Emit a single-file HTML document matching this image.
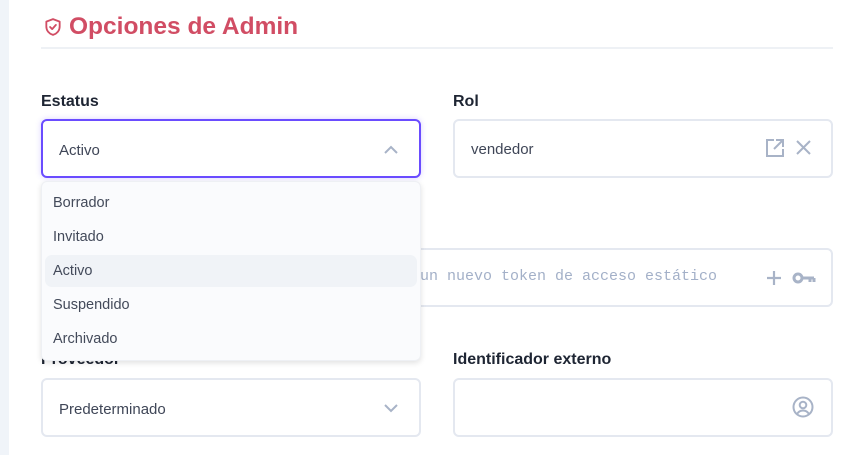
<!DOCTYPE html>
<html><head><meta charset="utf-8"><style>
*{box-sizing:border-box;margin:0;padding:0}
body{width:855px;height:455px;background:#fff;font-family:"Liberation Sans",sans-serif;position:relative;overflow:hidden}
.strip{position:absolute;left:0;top:0;width:9px;height:455px;background:#f0f4f9}
.title{position:absolute;left:69px;top:13px;font-size:24.5px;font-weight:bold;color:#d14d64}
.hr{position:absolute;left:41px;top:47px;width:792px;height:2px;background:#eef1f5}
.lbl{position:absolute;font-size:16px;font-weight:bold;color:#1e2533}
.box{position:absolute;border:2px solid #e4e8f0;border-radius:6px;background:#fff;height:59px}
.txt{position:absolute;font-size:15px;color:#3f4657}
.dd{position:absolute;left:41px;top:181px;width:380px;height:180px;background:#fafbfd;border-radius:6px;box-shadow:0 2px 6px rgba(0,0,0,.12);border:1px solid #eef0f4}
.it{position:absolute;left:11px;font-size:14.5px;color:#434a5a}
.hl{position:absolute;left:3px;top:73px;width:372px;height:32px;background:#f0f3f7;border-radius:7px}
svg{position:absolute}
</style></head><body>
<div class="strip"></div>
<svg style="left:43px;top:17px" width="20" height="20" viewBox="0 0 24 24" fill="none" stroke="#d14d64" stroke-width="2.2" stroke-linecap="round" stroke-linejoin="round"><path d="M12 2.5l8 3v6c0 5-3.5 8.5-8 10-4.5-1.5-8-5-8-10v-6z"/><path d="M8.5 12l2.5 2.5 4.5-5"/></svg>
<div class="title">Opciones de Admin</div>
<div class="hr"></div>

<div class="lbl" style="left:41px;top:93px">Estatus</div>
<div class="box" style="left:41px;top:119px;width:380px;border-color:#6a4cff;box-shadow:0 0 6px rgba(106,76,255,.25)"></div>
<div class="txt" style="left:59px;top:142px">Activo</div>
<svg style="left:383px;top:144px" width="16" height="12" viewBox="0 0 16 12" fill="none" stroke="#a8b3c7" stroke-width="2"><path d="M2 9l6-6 6 6"/></svg>

<div class="lbl" style="left:453px;top:93px">Rol</div>
<div class="box" style="left:453px;top:119px;width:380px"></div>
<div class="txt" style="left:471px;top:141px">vendedor</div>
<svg style="left:765px;top:138px" width="20" height="20" viewBox="0 0 20 20" fill="none" stroke="#a8b3c7" stroke-width="2"><path d="M9 2H2v16h16v-7"/><path d="M11 2h7v7M18 2l-9 9"/></svg>
<svg style="left:795px;top:139px" width="17" height="17" viewBox="0 0 17 17" fill="none" stroke="#a8b3c7" stroke-width="2"><path d="M2 2l13 13M15 2L2 15"/></svg>

<div class="box" style="left:300px;top:248px;width:533px"></div>
<div style="position:absolute;left:420px;top:268px;font-family:'Liberation Mono',monospace;font-size:15px;color:#a3b0c8">un nuevo token de acceso estático</div>
<svg style="left:766px;top:270px" width="16" height="16" viewBox="0 0 16 16" fill="none" stroke="#a8b3c7" stroke-width="2.2"><path d="M8 1v14M1 8h14"/></svg>
<svg style="left:792px;top:270px" width="24" height="16" viewBox="0 0 24 16" fill="none" stroke="#a8b3c7" stroke-width="3"><circle cx="6" cy="8" r="4"/><path d="M10 8h12M18 8v4M22 8v4"/></svg>

<div class="lbl" style="left:41px;top:351px">Proveedor</div>
<div class="box" style="left:41px;top:378px;width:380px"></div>
<div class="txt" style="left:59px;top:401px">Predeterminado</div>
<svg style="left:383px;top:402px" width="16" height="12" viewBox="0 0 16 12" fill="none" stroke="#a8b3c7" stroke-width="2"><path d="M2 3l6 6 6-6"/></svg>

<div class="lbl" style="left:453px;top:351px">Identificador externo</div>
<div class="box" style="left:453px;top:378px;width:380px"></div>
<svg style="left:792px;top:396px" width="22" height="22" viewBox="0 0 22 22" fill="none" stroke="#a8b3c7" stroke-width="2"><circle cx="11" cy="11" r="9.5"/><circle cx="11" cy="9" r="3.3"/><path d="M5 18c1.5-2.5 3.5-3.5 6-3.5s4.5 1 6 3.5"/></svg>

<div class="dd">
<div class="hl"></div>
<div class="it" style="top:13px">Borrador</div>
<div class="it" style="top:47px">Invitado</div>
<div class="it" style="top:81px">Activo</div>
<div class="it" style="top:115px">Suspendido</div>
<div class="it" style="top:149px">Archivado</div>
</div>
</body></html>
